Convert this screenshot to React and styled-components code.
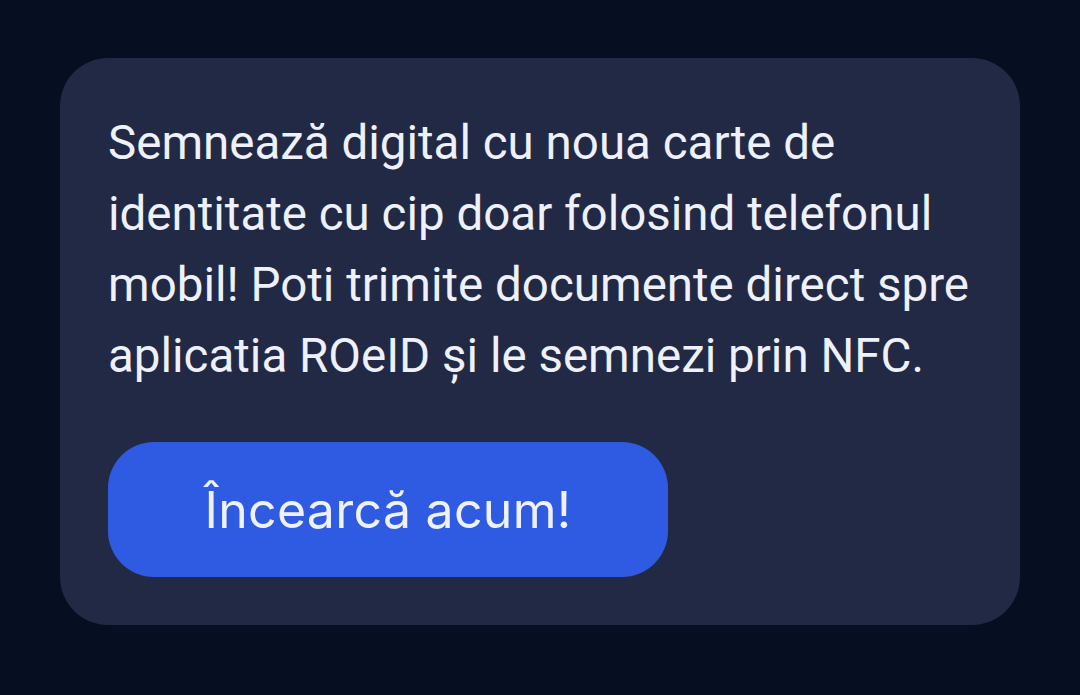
import React from 'react';
import styled, { createGlobalStyle } from 'styled-components';

const GlobalStyle = createGlobalStyle`
  html, body {
    margin: 0;
    padding: 0;
    background: #060e22;
  }
  body {
    font-family: Roboto, "Noto Sans", sans-serif;
  }
`;

const Page = styled.div`
  width: 1080px;
  height: 695px;
  padding: 58px 60px 0;
  box-sizing: border-box;
  background: #060e22;
`;

const Card = styled.div`
  width: 960px;
  height: 567px;
  box-sizing: border-box;
  background: #212945;
  border-radius: 48px;
  padding: 50px 48px 0;
  display: flex;
  flex-direction: column;
  align-items: flex-start;
`;

const Message = styled.p`
  margin: 0;
  font-family: Roboto, sans-serif;
  font-size: 47.5px;
  line-height: 71px;
  color: #eef0fa;
  width: 880px;
`;

const TryButton = styled.button`
  margin-top: 50px;
  width: 560px;
  height: 135px;
  border: none;
  border-radius: 46px;
  background: #2f5be3;
  color: #eef0fa;
  font-family: Inter, Roboto, sans-serif;
  font-size: 50px;
  font-weight: 400;
  letter-spacing: 0.3px;
  cursor: pointer;
`;

export default function App() {
  return (
    <>
      <GlobalStyle />
      <Page>
        <Card>
          <Message>
            Semnează digital cu noua carte de identitate cu cip doar folosind telefonul
            mobil! Poti trimite documente direct spre aplicatia ROeID și le semnezi prin NFC.
          </Message>
          <TryButton>Încearcă acum!</TryButton>
        </Card>
      </Page>
    </>
  );
}
